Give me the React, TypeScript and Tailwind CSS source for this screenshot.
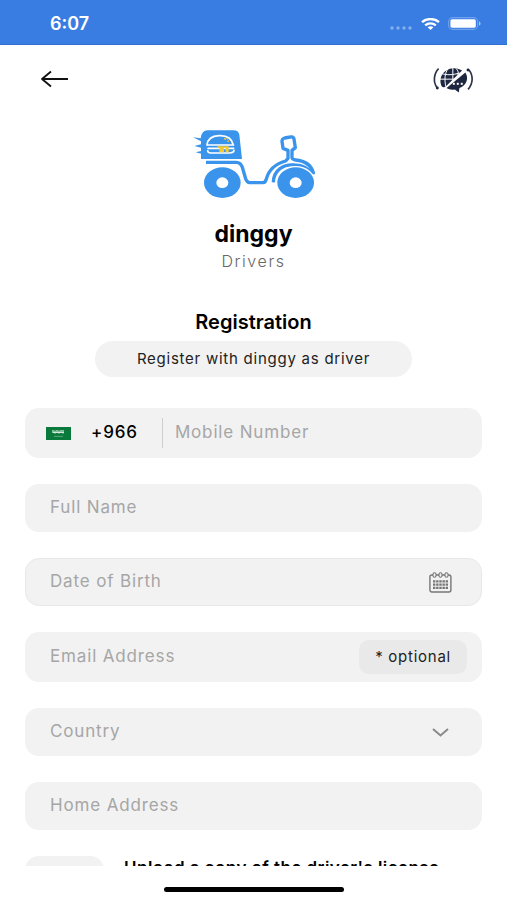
import type { ReactNode } from "react";

const inputClass =
  "min-w-0 flex-1 bg-transparent text-[17px] tracking-wider text-[#3c3c3c] outline-none placeholder:text-[#a6a6a6]";

function StatusBar() {
  return (
    <div className="flex h-[45px] shrink-0 items-center justify-between border-b border-[#2f6fd2] bg-[#3a7de2] pl-[50px] pr-[26px] pt-[3px] text-white">
      <time className="text-[18px] font-semibold">6:07</time>
      <div className="flex items-center gap-2">
        <svg className="mt-2 h-1 w-[23px]" viewBox="0 0 23 4" fill="#83aff0" aria-hidden="true">
          <circle cx="2" cy="2" r="1.7" />
          <circle cx="8" cy="2" r="1.7" />
          <circle cx="14" cy="2" r="1.7" />
          <circle cx="20" cy="2" r="1.7" />
        </svg>
        <svg className="h-3 w-[19px]" viewBox="0 0 19 12" fill="none" stroke="#fff" strokeWidth="2.4" aria-hidden="true">
          <path d="M1 4.2C5.6 0 13.4 0 18 4.2" />
          <path d="M4.2 7.4C7.2 4.7 11.8 4.7 14.8 7.4" />
          <path d="M9.5 12 6.6 9.2C8.2 7.9 10.8 7.9 12.4 9.2Z" fill="#fff" stroke="none" />
        </svg>
        <svg className="h-[13px] w-[33px]" viewBox="0 0 33 13" fill="none" aria-hidden="true">
          <rect x="0.6" y="0.6" width="29" height="11.8" rx="4" stroke="#6fa2ee" strokeWidth="1.1" />
          <rect x="2.4" y="2.3" width="25.4" height="8.4" rx="1.6" fill="#fff" />
          <path d="M31 4.4C33 5 33 8 31 8.6Z" fill="#a8c8f6" />
        </svg>
      </div>
    </div>
  );
}

function LanguageIcon() {
  return (
    <svg className="h-[27px] w-[41px]" viewBox="24 16 124 80" fill="none" aria-hidden="true">
      <path d="M41 23C26 38 24 64 36 80" stroke="#2b3347" strokeWidth="5" />
      <circle cx="37" cy="82" r="4.5" fill="#1d2740" />
      <path d="M133 27C146 44 146 68 130 86" stroke="#2b3347" strokeWidth="5" />
      <circle cx="130" cy="27" r="4.5" fill="#1d2740" />
      <path d="M49 74C40 51 55 24 85 22C96 21 105 24 112 29L61 79C55 80 51 79 49 74Z" fill="#1d2740" />
      <g stroke="#fff" strokeWidth="3">
        <path d="M50 38C65 43 85 43 104 36M45 55H88M84 21V59M70 23C59 37 58 57 63 78M92 21C101 29 102 37 98 43" />
      </g>
      <path d="M122 35C134 54 124 75 104 82L102 95L90 86C80 88 72 86 65 82Z" fill="#1d2740" />
      <g fill="#fff">
        <rect x="84" y="66" width="6" height="6" />
        <rect x="96" y="66" width="6" height="6" />
        <rect x="108" y="66" width="6" height="6" />
      </g>
    </svg>
  );
}

function Logo() {
  return (
    <svg className="h-[70px] w-[123px]" viewBox="37 40 369 210" fill="none" role="img" aria-label="dinggy scooter">
      <path d="M84 44H162Q176 44 179 57L187 130H64V114L48 110L64 106V96L44 91L64 86V77L40 65L63 68Q66 44 84 44Z" fill="#3a94ec" />
      <path d="M82 88C84 68 98 61 118 60C142 59 157 69 161 88Z" stroke="#fff" strokeWidth="5" fill="#3a94ec" />
      <path d="M85 98H162M84 105C84 112 92 112 100 112H148C156 112 163 111 163 104" stroke="#fff" strokeWidth="5" strokeLinecap="round" />
      <path d="M113 92H147V110H138V97H133V110H119V97H113Z" fill="#f5c932" />
      <path d="M133 68L139 71M143 77L148 76M141 68L145 70" stroke="#f5c932" strokeWidth="4" />
      <path d="M79 140H170C181 140 185 146 188 155L198 189Q202 201 210 201H250Q257 201 260 190C267 163 286 145 318 136L325 128V104L310 98L307 77Q307 69 315 67L332 64Q341 62 343 70L347 96L337 104V127Q339 132 348 133C379 136 397 151 402 176" stroke="#3a94ec" strokeWidth="10" strokeLinejoin="round" />
      <path d="M281 200C282 162 312 145 345 148C370 149 388 160 399 176" stroke="#3a94ec" strokeWidth="10" />
      <ellipse cx="128" cy="201" rx="55" ry="46" fill="#3a94ec" />
      <ellipse cx="128" cy="201" rx="18" ry="16" fill="#fff" />
      <ellipse cx="348" cy="201" rx="60" ry="50" fill="#fff" />
      <ellipse cx="348" cy="201" rx="55" ry="46" fill="#3a94ec" />
      <ellipse cx="348" cy="201" rx="18" ry="16" fill="#fff" />
    </svg>
  );
}

function SaudiFlag() {
  return (
    <svg className="h-[13px] w-[25px]" viewBox="0 0 25 13" aria-hidden="true">
      <rect width="25" height="13" fill="#0a7a3c" />
      <path d="M7 3V6M9 3.5V6.5M11 3V6M13 3.5V6.5M15 3V6M17 3V6.5M6.5 5.5H18" stroke="#d3eadb" strokeWidth="1.2" />
      <path d="M8 9.4H17" stroke="#6db18a" strokeWidth="0.8" />
    </svg>
  );
}

function CalendarIcon() {
  return (
    <svg className="h-[21px] w-[23px]" viewBox="0 0 23 21" fill="none" stroke="#777" aria-hidden="true">
      <rect x="0.9" y="3" width="21" height="17" rx="2" strokeWidth="1.4" />
      <g fill="#f2f2f2" strokeWidth="1.1">
        <rect x="4" y="0.7" width="3" height="4.5" rx="1.5" />
        <rect x="10" y="0.7" width="3" height="4.5" rx="1.5" />
        <rect x="16" y="0.7" width="3" height="4.5" rx="1.5" />
      </g>
      <path d="M4 9.3H19M4 12.6H19M4 15.9H19" strokeWidth="2.2" strokeDasharray="2.4 0.75" />
    </svg>
  );
}

function Field({ className, children }: { className: string; children: ReactNode }) {
  return <div className={`flex shrink-0 items-center rounded-[14px] bg-[#f2f2f2] ${className}`}>{children}</div>;
}

export default function App() {
  return (
    <div className="flex h-screen flex-col overflow-hidden bg-white font-['Inter','Liberation_Sans',sans-serif] text-black">
      <StatusBar />
      <main className="flex min-h-0 flex-1 flex-col overflow-hidden">
        <header className="flex h-[68px] shrink-0 items-center justify-between pl-10 pr-[33px]">
          <button type="button" aria-label="Back">
            <svg className="h-[18px] w-7" viewBox="0 0 28 18" fill="none" stroke="#111" strokeWidth="1.8" aria-hidden="true">
              <path d="M11 1.5L2 9L11 16.5M2 9H28" strokeLinejoin="round" />
            </svg>
          </button>
          <button type="button" aria-label="Change language">
            <LanguageIcon />
          </button>
        </header>

        <section className="flex shrink-0 flex-col items-center pt-4">
          <Logo />
          <h1 className="mt-[21px] text-[23px] font-bold leading-7">dinggy</h1>
          <p className="text-[16px] font-light leading-[26px] tracking-widest text-[#666]">Drivers</p>
          <h2 className="mt-9 text-[20px] font-semibold leading-6">Registration</h2>
          <p className="mt-[7px] flex h-9 w-5/8 items-center justify-center rounded-full bg-[#f2f2f2] text-[15px] tracking-wider text-[#222]">
            Register with dinggy as driver
          </p>
        </section>

        <form className="mt-[31px] flex flex-col gap-[26px] px-[25px]">
          <Field className="h-[50px]">
            <button type="button" className="flex items-center gap-5 pl-[21px] text-[17px] font-medium tracking-wider" aria-label="Country code +966">
              <SaudiFlag />
              <span>+966</span>
            </button>
            <span className="ml-6 mr-3 h-[30px] w-px bg-[#cfcfcf]" />
            <input className={inputClass} type="tel" aria-label="Mobile Number" placeholder="Mobile Number" />
          </Field>
          <Field className="h-12 px-[25px]">
            <input className={inputClass} type="text" aria-label="Full Name" placeholder="Full Name" />
          </Field>
          <Field className="h-12 border border-[#e8e8e8] pl-6 pr-[29px]">
            <input className={inputClass} type="text" aria-label="Date of Birth" placeholder="Date of Birth" />
            <button type="button" aria-label="Choose date">
              <CalendarIcon />
            </button>
          </Field>
          <Field className="h-[50px] pl-[25px] pr-[15px]">
            <input className={inputClass} type="email" aria-label="Email Address" placeholder="Email Address" />
            <span className="flex h-[34px] items-center rounded-[10px] bg-[#e9e9e9] px-4 text-[15px] tracking-wider text-[#222]">* optional</span>
          </Field>
          <Field className="h-12 pl-[25px] pr-[33px]">
            <select className="min-w-0 flex-1 appearance-none bg-transparent text-[17px] tracking-wider text-[#a6a6a6] outline-none" aria-label="Country" defaultValue="">
              <option value="">Country</option>
            </select>
            <svg className="h-[9px] w-[17px]" viewBox="0 0 17 9" fill="none" stroke="#8a8a8a" strokeWidth="2" aria-hidden="true">
              <path d="M1 1L8.5 7.5L16 1" />
            </svg>
          </Field>
          <Field className="h-12 px-[25px]">
            <input className={inputClass} type="text" aria-label="Home Address" placeholder="Home Address" />
          </Field>
          <div className="flex items-start gap-5">
            <button type="button" className="h-[79px] w-[79px] shrink-0 rounded-[14px] bg-[#f2f2f2]" aria-label="Upload driver's license" />
            <p className="text-[17px] font-semibold leading-6 tracking-wide">Upload a copy of the driver's license</p>
          </div>
        </form>
      </main>
      <footer className="flex h-[34px] shrink-0 justify-center bg-white pt-[21px]">
        <div className="h-[5px] w-[180px] rounded-full bg-black" />
      </footer>
    </div>
  );
}
